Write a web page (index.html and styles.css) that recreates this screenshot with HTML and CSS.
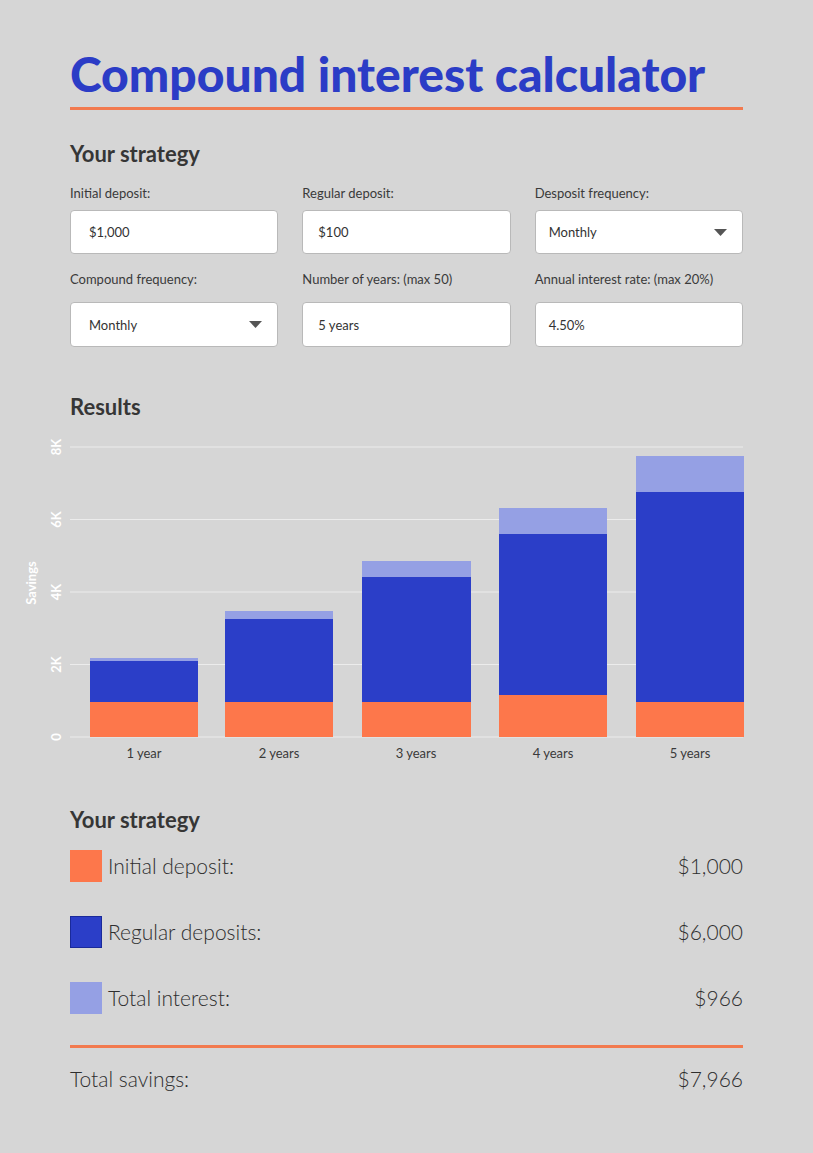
FILE: index.html
```html
<!DOCTYPE html>
<html lang="en">
<head>
<meta charset="utf-8">
<title>Compound interest calculator</title>
<link rel="stylesheet" href="styles.css">
</head>
<body>
<main class="page">
  <h1 class="title">Compound interest calculator</h1>

  <h2 class="section-title strategy-title">Your strategy</h2>
  <div class="form-grid">
    <div class="field col1">
      <label class="field-label">Initial deposit:</label>
      <div class="input">$1,000</div>
    </div>
    <div class="field col2">
      <label class="field-label">Regular deposit:</label>
      <div class="input">$100</div>
    </div>
    <div class="field col3">
      <label class="field-label">Desposit frequency:</label>
      <div class="input select"><span>Monthly</span>
        <svg class="caret" width="13" height="7" viewBox="0 0 13 7"><path d="M0 0H13L6.5 7Z"/></svg>
      </div>
    </div>
    <div class="field col1 row2">
      <label class="field-label">Compound frequency:</label>
      <div class="input select"><span>Monthly</span>
        <svg class="caret" width="13" height="7" viewBox="0 0 13 7"><path d="M0 0H13L6.5 7Z"/></svg>
      </div>
    </div>
    <div class="field col2 row2">
      <label class="field-label">Number of years: (max 50)</label>
      <div class="input">5 years</div>
    </div>
    <div class="field col3 row2">
      <label class="field-label">Annual interest rate: (max 20%)</label>
      <div class="input">4.50%</div>
    </div>
  </div>

  <h2 class="section-title results-title">Results</h2>
  <div class="chart">
    <svg class="chart-svg" width="813" height="365" viewBox="0 420 813 365">
      <g class="grid">
        <line x1="70" x2="743" y1="446" y2="446"/>
        <line x1="70" x2="743" y1="518.5" y2="518.5"/>
        <line x1="70" x2="743" y1="591" y2="591"/>
        <line x1="70" x2="743" y1="663.5" y2="663.5"/>
        <line x1="70" x2="743" y1="736" y2="736"/>
      </g>
      <g class="y-labels">
        <text transform="translate(60.5 446) rotate(-90)">8K</text>
        <text transform="translate(60.5 518.5) rotate(-90)">6K</text>
        <text transform="translate(60.5 591) rotate(-90)">4K</text>
        <text transform="translate(60.5 663.5) rotate(-90)">2K</text>
        <text transform="translate(60.5 736) rotate(-90)">0</text>
        <text class="axis-title" transform="translate(35.5 582) rotate(-90)">Savings</text>
      </g>
      <g class="bars">
        <rect class="interest" x="90" y="657" width="108" height="3"/>
        <rect class="regular" x="90" y="660" width="108" height="41"/>
        <rect class="initial" x="90" y="701" width="108" height="35"/>

        <rect class="interest" x="225" y="610" width="108" height="8"/>
        <rect class="regular" x="225" y="618" width="108" height="83"/>
        <rect class="initial" x="225" y="701" width="108" height="35"/>

        <rect class="interest" x="362" y="560" width="109" height="16"/>
        <rect class="regular" x="362" y="576" width="109" height="125"/>
        <rect class="initial" x="362" y="701" width="109" height="35"/>

        <rect class="interest" x="499" y="507" width="108" height="26"/>
        <rect class="regular" x="499" y="533" width="108" height="161"/>
        <rect class="initial" x="499" y="694" width="108" height="42"/>

        <rect class="interest" x="636" y="455" width="108" height="36"/>
        <rect class="regular" x="636" y="491" width="108" height="210"/>
        <rect class="initial" x="636" y="701" width="108" height="35"/>
      </g>
      <g class="x-labels">
        <text x="144" y="757">1 year</text>
        <text x="279" y="757">2 years</text>
        <text x="416" y="757">3 years</text>
        <text x="553" y="757">4 years</text>
        <text x="690" y="757">5 years</text>
      </g>
    </svg>
  </div>

  <h2 class="section-title legend-title">Your strategy</h2>
  <ul class="legend">
    <li class="legend-row"><span class="swatch swatch-initial"></span><span class="legend-label">Initial deposit:</span><span class="legend-value">$1,000</span></li>
    <li class="legend-row"><span class="swatch swatch-regular"></span><span class="legend-label">Regular deposits:</span><span class="legend-value">$6,000</span></li>
    <li class="legend-row"><span class="swatch swatch-interest"></span><span class="legend-label">Total interest:</span><span class="legend-value">$966</span></li>
  </ul>
  <div class="total-row">
    <span class="total-label">Total savings:</span>
    <span class="total-value">$7,966</span>
  </div>
</main>
</body>
</html>
```

FILE: styles.css
```css
* { box-sizing: border-box; }

html, body {
  margin: 0;
  padding: 0;
  background: #d6d6d6;
}

body {
  font-family: Lato, "Open Sans", "Liberation Sans", sans-serif;
  color: #333;
}

.page {
  width: 813px;
  padding: 46px 70px 40px;
}

.title {
  margin: 0;
  font-family: Lato, "Liberation Sans", sans-serif;
  font-weight: 900;
  font-size: 48px;
  line-height: 56px;
  color: #2b3cc6;
  padding-bottom: 5px;
  border-bottom: 3px solid #f27a4f;
  letter-spacing: 0;
}

.section-title {
  margin: 0;
  font-size: 22px;
  line-height: 28px;
  font-weight: 700;
  color: #363636;
}

.strategy-title { margin-top: 30px; }

.form-grid {
  display: grid;
  grid-template-columns: repeat(3, 1fr);
  column-gap: 24px;
  margin-top: 16px;
}

.field { display: flex; flex-direction: column; }

.field-label {
  font-size: 13px;
  line-height: 18px;
  color: #3a3a3a;
  margin-bottom: 8px;
}

.row2 { margin-top: 16px; }
.row2 .field-label { margin-bottom: 14px; }

.input {
  height: 44px;
  background: #fff;
  border: 1px solid #b9b9b9;
  border-radius: 4px;
  padding: 0 13px;
  display: flex;
  align-items: center;
  justify-content: space-between;
  font-size: 13px;
  color: #333;
}

.col1 .input { padding-left: 18px; }
.col2 .input { padding-left: 15px; }
.col3 .input { padding-left: 13px; }

.row2 .input { height: 45px; }

.caret { fill: #555; margin-right: 2px; }

.results-title { margin-top: 46px; }

.chart {
  margin: 0 -70px;
}

.chart-svg { display: block; }

.grid line {
  stroke: #ececec;
  stroke-width: 1;
}

.y-labels text {
  fill: #fff;
  font-size: 13px;
  font-weight: 700;
  text-anchor: middle;
}

.y-labels .axis-title { font-size: 13px; }

.bars .initial { fill: #fd774b; }
.bars .regular { fill: #2b3ec8; }
.bars .interest { fill: #95a0e4; }

.x-labels text {
  fill: #3a3a3a;
  font-size: 13px;
  text-anchor: middle;
}

.legend-title { margin-top: 20px; }

.legend {
  list-style: none;
  margin: 16px 0 0;
  padding: 0;
  display: flex;
  flex-direction: column;
  gap: 34px;
}

.legend-row {
  display: flex;
  align-items: center;
  height: 32px;
  font-size: 21px;
  line-height: 32px;
  font-weight: 300;
  color: #2e2e2e;
}

.swatch {
  width: 32px;
  height: 32px;
  margin-right: 6px;
  flex: none;
}

.swatch-initial { background: #fd774b; }
.swatch-regular { background: #2b3ec8; border: 1px solid #1a2a9a; }
.swatch-interest { background: #95a0e4; }

.legend-label { flex: 1; }

.legend-value { text-align: right; }

.total-row {
  margin-top: 31px;
  border-top: 3px solid #f27a4f;
  padding-top: 15px;
  display: flex;
  justify-content: space-between;
  font-size: 21px;
  line-height: 32px;
  font-weight: 300;
  color: #2e2e2e;
}
```
